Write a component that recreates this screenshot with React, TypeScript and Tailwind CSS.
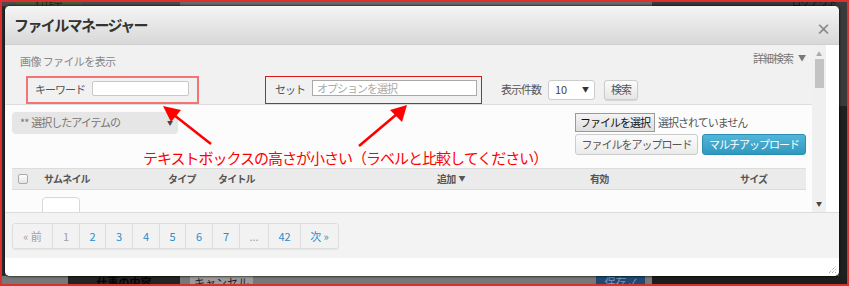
import React from "react";

type PageItem = { label: string; w: string; link: boolean };

const pages: PageItem[] = [
  { label: "« 前", w: "w-[39px]", link: false },
  { label: "1", w: "w-[27px]", link: false },
  { label: "2", w: "w-[26px]", link: true },
  { label: "3", w: "w-[27px]", link: true },
  { label: "4", w: "w-[27px]", link: true },
  { label: "5", w: "w-[26px]", link: true },
  { label: "6", w: "w-[27px]", link: true },
  { label: "7", w: "w-[27px]", link: true },
  { label: "...", w: "w-[29px]", link: false },
  { label: "42", w: "w-[32px]", link: true },
  { label: "次 »", w: "w-[38px]", link: true },
];

function Backdrop() {
  return (
    <div className="flex h-full flex-col bg-[#5e5e5e]">
      {/* only the top 6px of the page peeks out above the dialog */}
      <div className="flex h-[6px] overflow-hidden text-[9px] leading-[6px]">
        <div className="w-[16px] bg-[#4c4c4c]" />
        <div className="flex w-[66px] items-end justify-center overflow-hidden bg-[#4a5a3e] text-[#1d2418]">行作中</div>
        <div className="w-[98px] bg-[#4c4c4c]" />
        <div className="w-[472px] bg-[#6a6a6a]" />
        <div className="flex flex-1 items-end justify-end overflow-hidden bg-[#3b3b3b] pr-[12px] text-[#111]">ログアウト</div>
      </div>
      <div className="flex flex-1">
        <div className="w-[5px] bg-[#2c2c2c]" />
        <div className="flex-1" />
        <div className="flex w-[10px] flex-col">
          <div className="h-[100px] bg-[#3a3a3a]" />
          <div className="flex-1 bg-[#1f1f1f]" />
        </div>
      </div>
      <div className="flex h-[10px] overflow-hidden text-[11px] leading-[12px]">
        <div className="w-[68px] bg-[#777]" />
        <div className="flex w-[112px] justify-center bg-[#232323] font-bold text-[#050505]">仕事の内容</div>
        <div className="w-[10px] bg-[#777]" />
        <div className="flex w-[63px] justify-center bg-[#9a9a9a] text-[#222]">キャンセル</div>
        <div className="w-[343px] bg-[#777]" />
        <div className="flex w-[49px] justify-center bg-[#1e4a72] text-[#7f98b0]">保存 ✓</div>
        <div className="w-[7px] bg-[#777]" />
        <div className="flex-1 bg-[#1d1d1d]" />
      </div>
    </div>
  );
}

function SearchRow() {
  return (
    <div className="mt-[6px] flex h-[28px] items-center pl-[21px] text-[11px] tracking-[-1px] text-[#555]">
      <div className="flex h-[28px] w-[173px] items-center border-2 border-[#f47373] pl-[7px]">
        <span className="w-[57px]">キーワード</span>
        <div className="mb-[3px] h-[15px] w-[97px] rounded-[2px] border border-[#c8c8c8] bg-white" />
      </div>
      <div className="ml-[66px] flex h-[28px] w-[217px] items-center border border-[#dd1515] pl-[9px]">
        <span className="w-[37px]">セット</span>
        <div className="mb-[3px] flex h-[16px] w-[165px] items-center border border-[#aaa] bg-white pl-[4px] text-[#aaa]">
          オプションを選択
        </div>
      </div>
      <span className="ml-[19px] w-[47px]">表示件数</span>
      <div className="flex h-[20px] w-[47px] items-center justify-between rounded-[3px] border border-[#ccc] bg-white pl-[6px] pr-[5px] tracking-normal text-[#444]">
        <span>10</span>
        <span className="text-[7px] text-[#333]">▼</span>
      </div>
      <div className="ml-[9px] flex h-[20px] w-[34px] items-center justify-center rounded-[3px] border border-[#ccc] bg-gradient-to-b from-[#fbfbfb] to-[#e6e6e6] text-[#555] shadow-[0_1px_1px_rgba(0,0,0,0.12)]">
        検索
      </div>
    </div>
  );
}

function Toolbar() {
  return (
    <div className="flex justify-between pl-[7px] pr-[6px] pt-[7px] text-[11px] tracking-[-1px]">
      <div className="flex h-[22px] w-[166px] items-center justify-between rounded-[4px] bg-[#e6e6e6] pl-[8px] pr-[6px] text-[#777]">
        <span>**&nbsp;&nbsp;選択したアイテムの</span>
        <span className="text-[6px] text-[#444]">▼</span>
      </div>
      <div className="mt-[1px] flex w-[231px] flex-col gap-[2px]">
        <div className="flex items-center">
          <div className="flex h-[19px] w-[80px] items-center justify-center border border-[#9a9a9a] bg-gradient-to-b from-[#f4f4f4] to-[#dedede] text-[#111]">
            ファイルを選択
          </div>
          <span className="ml-[3px] text-[#555]">選択されていません</span>
        </div>
        <div className="flex gap-[4px]">
          <div className="flex h-[21px] w-[123px] items-center justify-center rounded-[3px] border border-[#ccc] bg-gradient-to-b from-[#fbfbfb] to-[#ebebeb] text-[#555]">
            ファイルをアップロード
          </div>
          <div className="flex h-[21px] w-[104px] items-center justify-center rounded-[3px] border border-[#2a8db3] bg-gradient-to-b from-[#52b6d9] to-[#2f98bf] text-white">
            マルチアップロード
          </div>
        </div>
      </div>
    </div>
  );
}

function TableHead() {
  return (
    <div className="ml-[7px] mr-[6px] mt-[13px] flex h-[22px] items-center border-y border-[#dcdcdc] bg-[#ebebeb] text-[10px] font-bold tracking-[-0.8px] text-[#555]">
      <div className="w-[32px] pl-[6px]">
        <div className="h-[10px] w-[10px] rounded-[2px] border border-[#aaa] bg-gradient-to-b from-white to-[#e4e4e4]" />
      </div>
      <div className="w-[124px]">サムネイル</div>
      <div className="w-[50px]">タイプ</div>
      <div className="w-[219px]">タイトル</div>
      <div className="flex w-[153px] items-center gap-[3px]">
        追加 <span className="text-[7px] text-[#555]">▼</span>
      </div>
      <div className="w-[150px]">有効</div>
      <div className="flex-1">サイズ</div>
    </div>
  );
}

function Pagination() {
  return (
    <div className="ml-[7px] mt-[10px] flex h-[26px] w-fit rounded-[3px] border border-[#dedede] bg-[#f2f2f2] text-[11px] shadow-[0_1px_1px_rgba(0,0,0,0.06)]">
      {pages.map((p, i) => (
        <div
          key={p.label}
          className={`flex items-center justify-center ${p.w} ${i > 0 ? "border-l border-[#dedede]" : ""} ${p.link ? "text-[#2a8ccc]" : "text-[#a0a0a0]"}`}
        >
          {p.label}
        </div>
      ))}
    </div>
  );
}

function Modal() {
  return (
    <div className="absolute left-[5px] top-[6px] flex h-[270px] w-[834px] flex-col overflow-hidden rounded-[5px] bg-white shadow-[0_0_2px_1px_rgba(0,0,0,0.55)]">
      <div className="flex h-[39px] items-center justify-between border-b border-[#cfcfcf] bg-gradient-to-b from-[#f5f5f5] to-[#d8d8d8] pl-[9px] pr-[8px]">
        <span className="text-[15px] font-bold tracking-[-1.6px] text-[#333]">ファイルマネージャー</span>
        <span className="pt-[6px] text-[15px] font-bold leading-none text-[#888]">×</span>
      </div>

      <div className="flex h-[167px]">
        <div className="flex w-[807px] flex-col overflow-hidden bg-[#f1f1f1]">
          <div className="h-[70px]">
            <div className="flex justify-between pl-[15px] pr-[7px]">
              <span className="mt-[8px] text-[11px] tracking-[-0.6px] text-[#888]">画像 ファイルを表示</span>
              <span className="mt-[2px] flex items-center gap-[5px] text-[11px] tracking-[-1px] text-[#777]">
                詳細検索 <span className="text-[8px]">▼</span>
              </span>
            </div>
            <SearchRow />
          </div>
          <div className="flex-1 border-t border-[#dedede] bg-[#fcfcfc]">
            <Toolbar />
            <TableHead />
            <div className="ml-[37px] mt-[7px] h-[20px] w-[38px] rounded-t-[4px] border border-[#d8d8d8] bg-white" />
          </div>
        </div>
        <div className="flex w-[14px] flex-col items-center bg-[#f0f0f0] pt-[6px]">
          <span className="text-[6px] leading-[6px] text-[#aaa]">▲</span>
          <div className="mt-[2px] h-[29px] w-[9px] bg-[#c3c3c3]" />
          <div className="flex-1" />
          <span className="mb-[5px] text-[6px] leading-[6px] text-[#444]">▼</span>
        </div>
        <div className="flex-1 bg-white" />
      </div>

      <div className="h-[46px] border-t border-[#dcdcdc] bg-[#f3f3f3]">
        <Pagination />
      </div>

      <div className="flex h-[18px] items-end justify-end bg-white pb-[3px] pr-[3px]">
        <svg width="8" height="8" viewBox="0 0 8 8">
          <path d="M1 8 L8 1 M4 8 L8 4 M7 8 L8 7" stroke="#888" strokeWidth="1" strokeDasharray="1 1" />
        </svg>
      </div>
    </div>
  );
}

function Annotations() {
  return (
    <>
      <svg className="pointer-events-none absolute left-0 top-0" width="849" height="286" viewBox="0 0 849 286">
        <line x1="211" y1="144" x2="174" y2="115" stroke="#ff0000" strokeWidth="2.5" />
        <polygon points="163,106 181,110 171,122" fill="#ff0000" />
        <line x1="359" y1="146" x2="397" y2="114" stroke="#ff0000" strokeWidth="2.5" />
        <polygon points="407,105 402,122 390,110" fill="#ff0000" />
      </svg>
      <div className="pointer-events-none absolute left-[143px] top-[148px] text-[15px] leading-[20px] tracking-[-1px] text-[#ff0000]">
        テキストボックスの高さが小さい（ラベルと比較してください）
      </div>
      <div className="pointer-events-none absolute inset-0 border-2 border-[#d8312f]" />
    </>
  );
}

export default function App() {
  return (
    <div className="relative h-[286px] w-[849px] overflow-hidden font-['Noto_Sans_CJK_JP',sans-serif]">
      <Backdrop />
      <Modal />
      <Annotations />
    </div>
  );
}
